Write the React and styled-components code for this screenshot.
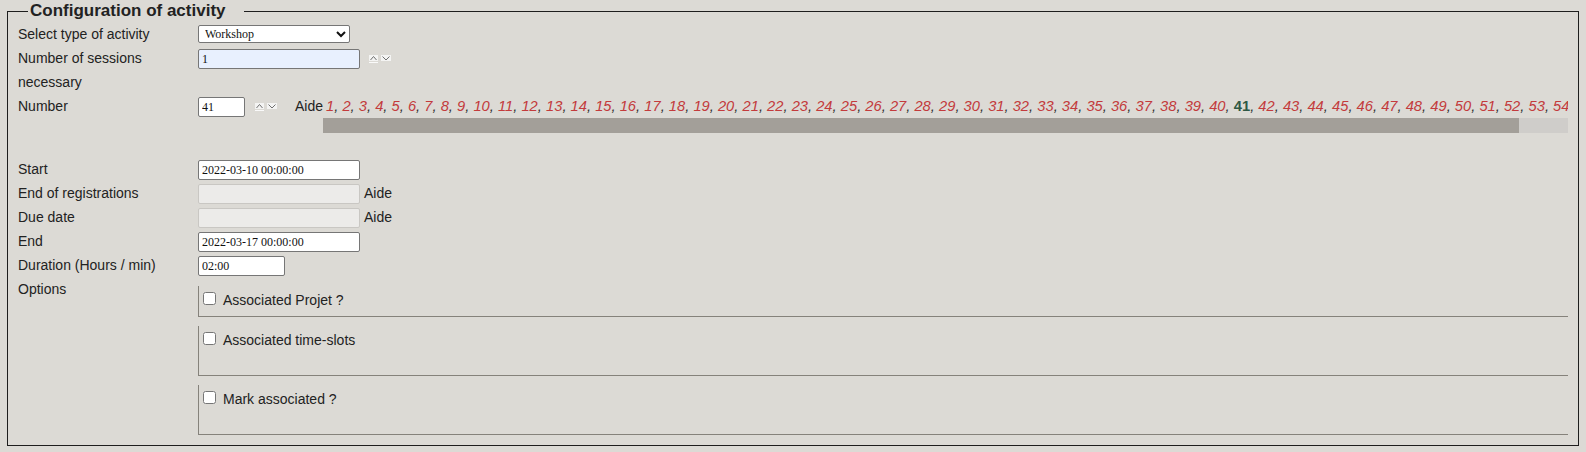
import React from 'react';
import styled, { createGlobalStyle } from 'styled-components';

const GlobalStyle = createGlobalStyle`
  html, body {
    margin: 0;
    background: #dcdad5;
  }
  body {
    font-family: "Liberation Sans", Arial, sans-serif;
    font-size: 14px;
    color: #222;
  }
`;

const Page = styled.div`
  padding: 1px 7px 0;
`;

const Fieldset = styled.fieldset`
  margin: 0;
  min-width: 0;
  border: 1px solid #1e1e1e;
  padding: 1px 10px 10px;
`;

const Legend = styled.legend`
  margin-left: 10px;
  padding: 0 18px 0 2px;
  font-size: 17px;
  font-weight: bold;
  line-height: 20px;
  color: #222;
`;

const Row = styled.div`
  display: grid;
  grid-template-columns: 180px minmax(0, 1fr);
  line-height: 24px;
  margin-bottom: ${p => p.$after || 0}px;
`;

const Label = styled.div``;

const Value = styled.div`
  display: flex;
  align-items: flex-start;
  min-width: 0;
`;

const TextInput = styled.input`
  box-sizing: border-box;
  flex: none;
  width: ${p => p.$w}px;
  height: 20px;
  margin: 3px 0 0;
  padding: 0 3px;
  font: 12px "Liberation Serif", "Times New Roman", serif;
  color: #111;
  background: ${p => (p.disabled ? '#ecebe9' : p.$filled ? '#e8f0fe' : '#fff')};
  border: 1px solid ${p => (p.disabled ? '#c9c7c3' : '#767676')};
  border-radius: 2px;
  outline: none;
`;

const Select = styled.select`
  box-sizing: border-box;
  width: 152px;
  height: 18px;
  margin: 3px 0 0;
  padding: 0 2px;
  font: 12px "Liberation Serif", "Times New Roman", serif;
  color: #111;
  background: #fff;
  border: 1px solid #767676;
  border-radius: 2px;
`;

const Spin = styled.svg`
  flex: none;
  margin: 9px 0 0 ${p => p.$gap}px;
`;

const Aide = styled.span`
  flex: none;
  margin-left: ${p => p.$gap}px;
`;

const ScrollArea = styled.div`
  flex: 1;
  min-width: 0;
  display: flex;
  flex-direction: column;
`;

const NumberLine = styled.div`
  overflow: hidden;
  white-space: nowrap;
  padding-left: 3px;
  font-size: 14.72px;
  font-style: italic;
  line-height: 24px;
  color: #333;
`;

const Track = styled.div`
  height: 15px;
  background: #cfcdca;
`;

const Thumb = styled.div`
  height: 100%;
  width: 96.1%;
  background: #a39f99;
`;

const NumLink = styled.a`
  color: #c33b3c;
  text-decoration: none;
`;

const Current = styled.b`
  font-style: normal;
  color: #2f5844;
`;

const Options = styled.div`
  padding-top: 9px;
  display: flex;
  flex-direction: column;
  gap: 9px;
`;

const OptionBox = styled.div`
  box-sizing: border-box;
  height: ${p => p.$h}px;
  padding-top: 2px;
  border-left: 1px solid #85827b;
  border-bottom: 1px solid #85827b;
`;

const Check = styled.label`
  display: flex;
  align-items: flex-start;
  line-height: 24px;
  input {
    width: 13px;
    height: 13px;
    margin: 4px 3px 0 4px;
  }
  span {
    margin-left: 4px;
  }
`;

function Spinner({ gap }) {
  return (
    <Spin $gap={gap} width="23" height="8" viewBox="0 0 23 8">
      <rect x="0" y="0" width="9" height="6" fill="#f4f4f3" />
      <polyline points="1.5,5 4.5,1.5 7.5,5" fill="none" stroke="#707070" strokeWidth="1" />
      <line x1="0" y1="7.5" x2="9" y2="7.5" stroke="#fafafa" />
      <rect x="12" y="0" width="10" height="6" fill="#f4f4f3" />
      <polyline points="13.5,1.5 17,5 20.5,1.5" fill="none" stroke="#707070" strokeWidth="1" />
    </Spin>
  );
}

const numbers = Array.from({ length: 56 }, (_, i) => i + 1);

const options = [
  { label: 'Associated Projet ?', h: 31 },
  { label: 'Associated time-slots', h: 50 },
  { label: 'Mark associated ?', h: 50 },
];

export default function App() {
  return (
    <>
      <GlobalStyle />
      <Page>
        <Fieldset>
          <Legend>Configuration of activity</Legend>

          <Row>
            <Label>Select type of activity</Label>
            <Value>
              <Select defaultValue="Workshop">
                <option>Workshop</option>
                <option>Course</option>
                <option>Seminar</option>
              </Select>
            </Value>
          </Row>

          <Row>
            <Label>Number of sessions necessary</Label>
            <Value>
              <TextInput $w={162} $filled defaultValue="1" />
              <Spinner gap={9} />
            </Value>
          </Row>

          <Row $after={24}>
            <Label>Number</Label>
            <Value>
              <TextInput $w={47} defaultValue="41" />
              <Spinner gap={10} />
              <Aide $gap={17}>Aide</Aide>
              <ScrollArea>
                <NumberLine>
                  {numbers.map((n, i) => (
                    <React.Fragment key={n}>
                      {i > 0 && ', '}
                      {n === 41 ? <Current>41</Current> : <NumLink href="#">{n}</NumLink>}
                    </React.Fragment>
                  ))}
                </NumberLine>
                <Track>
                  <Thumb />
                </Track>
              </ScrollArea>
            </Value>
          </Row>

          <Row>
            <Label>Start</Label>
            <Value>
              <TextInput $w={162} defaultValue="2022-03-10 00:00:00" />
            </Value>
          </Row>

          <Row>
            <Label>End of registrations</Label>
            <Value>
              <TextInput $w={162} disabled defaultValue="" />
              <Aide $gap={4}>Aide</Aide>
            </Value>
          </Row>

          <Row>
            <Label>Due date</Label>
            <Value>
              <TextInput $w={162} disabled defaultValue="" />
              <Aide $gap={4}>Aide</Aide>
            </Value>
          </Row>

          <Row>
            <Label>End</Label>
            <Value>
              <TextInput $w={162} defaultValue="2022-03-17 00:00:00" />
            </Value>
          </Row>

          <Row>
            <Label>Duration (Hours / min)</Label>
            <Value>
              <TextInput $w={87} defaultValue="02:00" />
            </Value>
          </Row>

          <Row>
            <Label>Options</Label>
            <Options>
              {options.map(o => (
                <OptionBox key={o.label} $h={o.h}>
                  <Check>
                    <input type="checkbox" />
                    <span>{o.label}</span>
                  </Check>
                </OptionBox>
              ))}
            </Options>
          </Row>
        </Fieldset>
      </Page>
    </>
  );
}
